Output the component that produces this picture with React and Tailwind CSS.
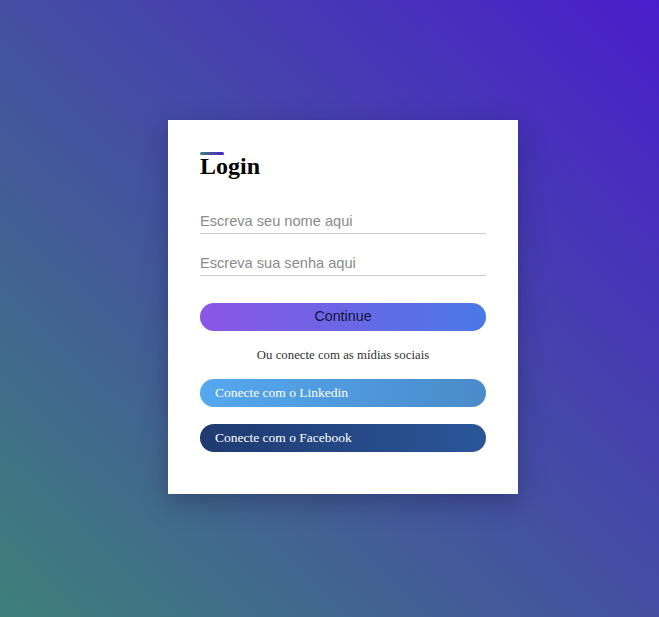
import React from "react";

const App = () => {
  return (
    <div className="h-screen w-full bg-linear-to-tr/srgb from-[#3e807a] to-[#4a1dcb] pl-[168px] pt-[120px]">
      <div className="w-[350px] h-[374px] bg-white px-8 pt-8 shadow-[0_8px_24px_rgba(20,20,60,0.35)]">
        <div className="relative">
          <div className="absolute left-0 top-0 w-6 h-[3px] rounded-full bg-linear-to-r/srgb from-[#3e807a] to-[#4a1dcb]" />
          <h1 className="text-[24px] leading-[28px] font-bold text-black font-['Liberation_Serif',serif]">
            Login
          </h1>
        </div>

        <div className="mt-[30px] flex flex-col gap-[18px] font-['Liberation_Sans',Arial,sans-serif]">
          <input
            type="text"
            placeholder="Escreva seu nome aqui"
            className="w-full h-6 pb-[2px] border-b border-[#cccccc] text-[14.6px] text-gray-700 outline-none placeholder:text-[#8a8a8a]"
          />
          <input
            type="password"
            placeholder="Escreva sua senha aqui"
            className="w-full h-6 pb-[2px] border-b border-[#cccccc] text-[14.6px] text-gray-700 outline-none placeholder:text-[#8a8a8a]"
          />
        </div>

        <button className="mt-[27px] w-full h-[28px] rounded-full bg-linear-to-r/srgb from-[#8c55e6] to-[#4978e6] text-[14.3px] text-[#141238] font-['Liberation_Sans',Arial,sans-serif]">
          Continue
        </button>

        <p className="mt-[17px] text-center text-[12.8px] leading-[14px] text-[#333333] font-['Liberation_Serif',serif]">
          Ou conecte com as mídias sociais
        </p>

        <div className="mt-[17px] flex flex-col gap-[17px] font-['Liberation_Serif',serif]">
          <button className="w-full h-[28px] rounded-full bg-linear-to-r/srgb from-[#55a8f0] to-[#4a8bca] text-left pl-[15px] text-[13.5px] text-white">
            Conecte com o Linkedin
          </button>
          <button className="w-full h-[28px] rounded-full bg-linear-to-r/srgb from-[#1f3a70] to-[#2a5699] text-left pl-[15px] text-[13.5px] text-white">
            Conecte com o Facebook
          </button>
        </div>
      </div>
    </div>
  );
};

export default App;
